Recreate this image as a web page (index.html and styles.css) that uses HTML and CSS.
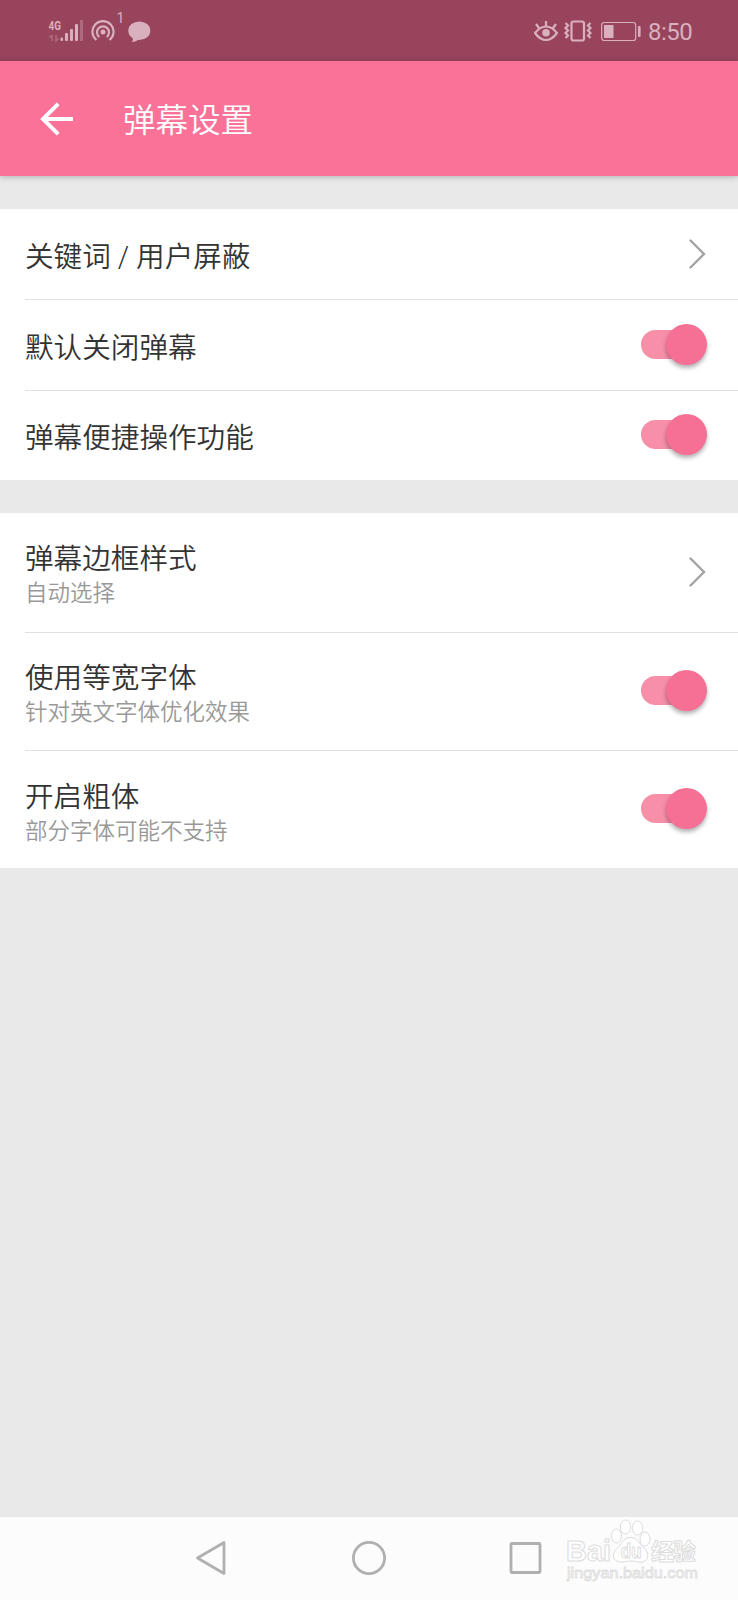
FILE: index.html
```
<!DOCTYPE html>
<html lang="zh-CN">
<head>
  <meta charset="UTF-8" />
  <title>弹幕设置</title>
  <link rel="stylesheet" href="styles.css">
</head>
<body>

  <!-- Status bar -->
  <div class="status-bar">
    <div class="status-left">
      <svg class="signal" width="36" height="61" viewBox="0 0 36 61">
        <text x="0.5" y="30" textLength="12.5" lengthAdjust="spacingAndGlyphs">4G</text>
        <g class="faded">
          <path d="M4 35v6M1.500 37.500L4 35M8 35v6l2.500-2.500" fill="none" stroke="#d9b0bd" stroke-width="1.500"/>
          <rect x="32" y="20" width="3" height="21"/>
        </g>
        <rect x="12.500" y="37.500" width="2.500" height="3.500" rx="1"/>
        <rect x="17" y="33" width="3" height="8" rx="1"/>
        <rect x="22" y="29" width="3" height="12" rx="1"/>
        <rect x="27" y="24" width="3" height="17" rx="1"/>
      </svg>
      <svg class="hotspot" width="24" height="61" viewBox="0 0 24 61">
        <circle cx="12" cy="32" r="2.500"/>
        <path d="M5.400 40A10.600 10.600 0 1 1 18.600 40M8.300 37A6 6 0 1 1 15.700 37"/>
      </svg>
      <span class="hotspot-count">1</span>
      <svg class="chat" width="23" height="61" viewBox="0 0 23 61">
        <ellipse cx="11.300" cy="30.700" rx="11" ry="9.300"/>
        <path d="M4 36Q6 40 3.500 42Q9 42 12 38z"/>
      </svg>
    </div>
    <div class="status-right">
      <svg class="line-icon" width="24" height="61" viewBox="0 0 24 61">
        <path d="M1 33Q6 26.500 12 26.500T23 33Q18 40 12 40T1 33zM12 26v-5M5 28l-3-4M19 28l3-4"/>
        <circle class="solid" cx="12" cy="32.800" r="3.800"/>
      </svg>
      <svg class="line-icon" width="28" height="61" viewBox="0 0 28 61">
        <rect x="7.500" y="21.500" width="12.500" height="19" rx="2"/>
        <path d="M1.500 23l2.500 2.500-2.500 2.500 2.500 2.500-2.500 2.500 2.500 2.500-2.500 2.500M26.500 23l-2.500 2.500 2.500 2.500-2.500 2.500 2.500 2.500-2.500 2.500 2.500 2.500"/>
      </svg>
      <svg class="battery" width="40" height="61" viewBox="0 0 40 61">
        <rect x="0.700" y="22.500" width="34" height="18" rx="2.500" fill="none" stroke="#d9b0bd" stroke-width="1.200"/>
        <rect x="3" y="25" width="9.500" height="13"/>
        <rect x="37" y="26" width="2.600" height="11" rx="1"/>
      </svg>
      <span class="clock">8:50</span>
    </div>
  </div>

  <!-- Title bar -->
  <header class="app-bar">
    <svg class="back" width="34" height="34" viewBox="0 0 34 34">
      <path d="M33 17H3M18.200 1.800L3 17l15.200 15.200"/>
    </svg>
    <h1>弹幕设置</h1>
  </header>

  <main>
    <section class="group">
      <div class="row">
        <div class="label">关键词 / 用户屏蔽</div>
        <svg class="chevron" width="17" height="30" viewBox="0 0 17 30"><path d="M1.500 1.500L15 15 1.500 28.500"/></svg>
      </div>
      <div class="row">
        <div class="label">默认关闭弹幕</div>
        <div class="switch"></div>
      </div>
      <div class="row">
        <div class="label">弹幕便捷操作功能</div>
        <div class="switch"></div>
      </div>
    </section>

    <section class="group tall">
      <div class="row">
        <div>
          <div class="label">弹幕边框样式</div>
          <div class="hint">自动选择</div>
        </div>
        <svg class="chevron" width="17" height="30" viewBox="0 0 17 30"><path d="M1.500 1.500L15 15 1.500 28.500"/></svg>
      </div>
      <div class="row">
        <div>
          <div class="label">使用等宽字体</div>
          <div class="hint">针对英文字体优化效果</div>
        </div>
        <div class="switch"></div>
      </div>
      <div class="row">
        <div>
          <div class="label">开启粗体</div>
          <div class="hint">部分字体可能不支持</div>
        </div>
        <div class="switch"></div>
      </div>
    </section>
  </main>

  <!-- Navigation keys -->
  <nav class="nav-bar">
    <svg width="36" height="36" viewBox="0 0 36 36"><path d="M30 2.500v31L3.500 18z"/></svg>
    <svg width="36" height="36" viewBox="0 0 36 36"><circle cx="18" cy="18" r="15.600"/></svg>
    <svg width="36" height="36" viewBox="0 0 36 36"><rect x="3" y="3.500" width="29" height="29" rx="1"/></svg>
    <svg class="watermark" width="136" height="66" viewBox="0 0 136 66">
      <text class="brand" x="1" y="43" textLength="45" lengthAdjust="spacingAndGlyphs">Bai</text>
      <ellipse cx="51.500" cy="18" rx="5" ry="7"/>
      <ellipse cx="60.500" cy="9" rx="5.200" ry="7"/>
      <ellipse cx="72.500" cy="10" rx="5.200" ry="7"/>
      <ellipse cx="80" cy="21" rx="5" ry="7"/>
      <path d="M65.500 19.500C58 19.500 57 27 51.500 31C46 36 48 43.500 55 44C59 44.300 62 43 66 43S73 44.500 77 44C84 43 84.500 35 79 30C74 26 73 19.500 65.500 19.500z"/>
      <text class="du" x="55.500" y="40" textLength="21" lengthAdjust="spacingAndGlyphs">du</text>
      <text class="cjk" x="86" y="42" textLength="45">经验</text>
      <text class="site" x="2" y="60" textLength="131" lengthAdjust="spacingAndGlyphs">jingyan.baidu.com</text>
    </svg>
  </nav>

</body>
</html>
```
FILE: styles.css
```
* {
  margin: 0;
  padding: 0;
  box-sizing: border-box;
}

body {
  height: 1600px;
  display: flex;
  flex-direction: column;
  background: #e9e9e9;
  font-family: Roboto, 'Noto Sans CJK SC', sans-serif;
  overflow: hidden;
}

svg {
  display: block;
  flex: none;
}

/* Status bar */
.status-bar {
  height: 61px;
  padding: 0 45px 0 48px;
  display: flex;
  justify-content: space-between;
  background: #98445c;
  color: #d9b0bd;
  fill: #d9b0bd;
}

.status-left,
.status-right {
  display: flex;
}

.signal text {
  font-size: 13px;
  font-weight: 700;
}

.faded {
  opacity: 0.35;
}

.hotspot {
  margin-left: 7px;
}

.hotspot path,
.line-icon {
  fill: none;
  stroke: #d9b0bd;
  stroke-width: 2.2;
}

.line-icon .solid {
  fill: #d9b0bd;
  stroke: none;
}

.hotspot-count {
  width: 9px;
  margin: 10px 3px 0 1px;
  font-size: 14px;
  line-height: 17px;
  text-align: center;
}

.line-icon {
  margin-right: 6px;
}

.line-icon + .line-icon {
  margin-right: 9px;
}

.clock {
  width: 45px;
  margin-left: 7px;
  font-size: 24px;
  line-height: 64px;
  white-space: nowrap;
  letter-spacing: -0.5px;
}

/* Title bar */
.app-bar {
  position: relative;
  height: 115px;
  padding-left: 40px;
  display: flex;
  align-items: center;
  background: #fb7299;
  box-shadow: 0 1px 6px rgba(0, 0, 0, 0.25);
}

.back {
  fill: none;
  stroke: #fff;
  stroke-width: 4;
}

.app-bar h1 {
  margin-left: 49px;
  padding-top: 4px;
  color: #fff;
  font-size: 32.5px;
  font-weight: 350;
  line-height: 40px;
}

/* Settings list */
main {
  flex: 1;
}

.group {
  margin-top: 33px;
  background: #fff;
}

.row {
  height: 90.4px;
  margin-left: 25px;
  padding-right: 31px;
  display: flex;
  align-items: center;
  justify-content: space-between;
}

.row + .row {
  border-top: 1px solid #e0e0e0;
}

.tall .row {
  height: 118.4px;
}

.label {
  padding-top: 6px;
  color: #333;
  font-size: 28.6px;
  font-weight: 350;
  line-height: 38px;
}

.tall .label {
  padding-top: 4px;
}

.hint {
  color: #999;
  font-size: 22.5px;
  font-weight: 350;
  line-height: 30px;
}

.chevron {
  margin-right: 1px;
  fill: none;
  stroke: #a3a3a3;
  stroke-width: 2.4;
  stroke-linecap: round;
}

.switch {
  position: relative;
  width: 60px;
  height: 29px;
  margin: 0 6px 2px 0;
  border-radius: 15px;
  background: #f78fa8;
}

.switch::after {
  content: "";
  position: absolute;
  top: -6px;
  right: -6px;
  width: 41px;
  height: 41px;
  border-radius: 50%;
  background: #f66f95;
  box-shadow: 0 3px 4px rgba(0, 0, 0, 0.3);
}

/* Navigation keys */
.nav-bar {
  position: relative;
  height: 83px;
  padding-bottom: 1px;
  display: flex;
  align-items: center;
  justify-content: center;
  gap: 121px;
  background: #fcfcfc;
  fill: none;
  stroke: #b0b0b0;
  stroke-width: 2.8;
  stroke-linejoin: round;
}

.watermark {
  position: absolute;
  left: 565px;
  top: 1px;
  fill: #fff;
  stroke: #dcdcdc;
  stroke-width: 1;
}

.watermark text {
  font-family: 'Liberation Sans', sans-serif;
  font-weight: 700;
}

.watermark .brand {
  font-size: 29px;
}

.watermark .du {
  font-size: 20px;
}

.watermark .cjk {
  font-family: 'Noto Sans CJK SC', sans-serif;
  font-size: 23px;
}

.watermark .site {
  font-size: 15px;
  font-weight: 400;
  stroke-width: 0.8;
}
```
